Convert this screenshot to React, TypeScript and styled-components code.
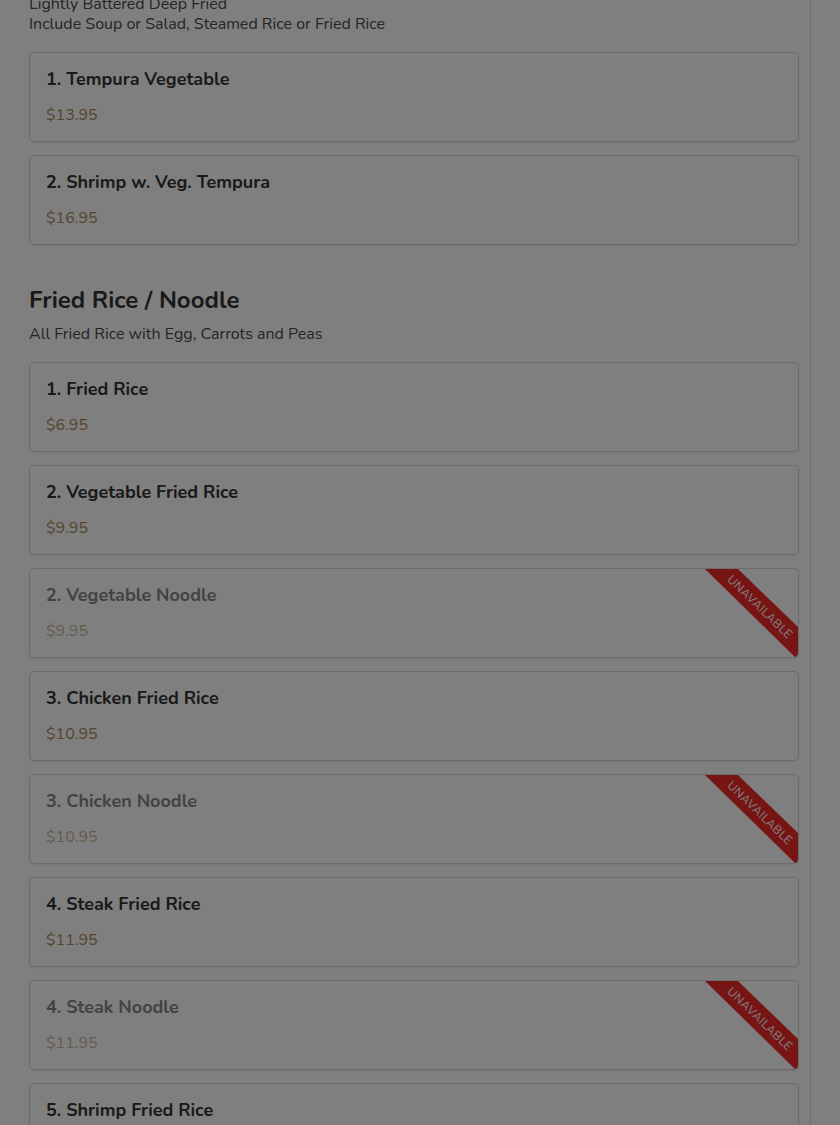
import React from "react";
import styled, { createGlobalStyle } from "styled-components";

const Global = createGlobalStyle`
  html, body { margin: 0; padding: 0; background: #ffffff; }
  body { font-family: "Nunito", "Lato", "Open Sans", sans-serif; overflow: hidden; }
`;

const Page = styled.div`
  width: 811px;
  min-height: 1125px;
  box-sizing: border-box;
  border-right: 1px solid #dcdcdc;
  padding: 0 11px 0 29px;
`;

const Section = styled.section<{ $first?: boolean }>`
  display: flex;
  flex-direction: column;
  margin-top: ${(p) => (p.$first ? "-6px" : "40px")};
`;

const Heading = styled.h2`
  margin: 0 0 9px;
  font-size: 24px;
  line-height: 30px;
  font-weight: 700;
  color: #333333;
`;

const Desc = styled.p`
  margin: 0;
  font-size: 16px;
  line-height: 20px;
  color: #4a4a4a;
`;

const List = styled.div`
  display: flex;
  flex-direction: column;
  gap: 13px;
  margin-top: 18px;
`;

const Card = styled.div`
  position: relative;
  display: flex;
  flex-direction: column;
  gap: 14px;
  padding: 15px 16px 15px;
  border: 1px solid #d6d6d6;
  border-radius: 5px;
  background: #ffffff;
  box-shadow: 0 1px 2px rgba(0, 0, 0, 0.08);
  overflow: hidden;
`;

const Title = styled.div<{ $off?: boolean }>`
  font-size: 18px;
  line-height: 22px;
  font-weight: 700;
  color: #333333;
  opacity: ${(p) => (p.$off ? 0.6 : 1)};
`;

const Price = styled.div<{ $off?: boolean }>`
  font-size: 16px;
  line-height: 22px;
  color: #a8895c;
  opacity: ${(p) => (p.$off ? 0.6 : 1)};
`;

const Ribbon = styled.div`
  position: absolute;
  top: 0;
  right: 0;
  width: 93px;
  height: 89px;
  background: #ee2828;
  clip-path: polygon(0 0, 33px 0, 93px 58px, 93px 87px, 91px 89px);
`;

const RibbonText = styled.span`
  position: absolute;
  left: 55px;
  top: 38px;
  transform: translate(-50%, -50%) rotate(44deg);
  font-size: 12px;
  letter-spacing: 0.3px;
  color: #ffffff;
  white-space: nowrap;
  font-family: "Nunito", "Lato", sans-serif;
`;

const Overlay = styled.div`
  position: fixed;
  inset: 0;
  background: rgba(0, 0, 0, 0.5);
`;

type Item = { name: string; price: string; off?: boolean };

const tempura: Item[] = [
  { name: "1. Tempura Vegetable", price: "$13.95" },
  { name: "2. Shrimp w. Veg. Tempura", price: "$16.95" },
];

const fried: Item[] = [
  { name: "1. Fried Rice", price: "$6.95" },
  { name: "2. Vegetable Fried Rice", price: "$9.95" },
  { name: "2. Vegetable Noodle", price: "$9.95", off: true },
  { name: "3. Chicken Fried Rice", price: "$10.95" },
  { name: "3. Chicken Noodle", price: "$10.95", off: true },
  { name: "4. Steak Fried Rice", price: "$11.95" },
  { name: "4. Steak Noodle", price: "$11.95", off: true },
  { name: "5. Shrimp Fried Rice", price: "$12.95" },
];

const MenuCard = ({ item }: { item: Item }) => (
  <Card>
    <Title $off={item.off}>{item.name}</Title>
    <Price $off={item.off}>{item.price}</Price>
    {item.off && (
      <Ribbon>
        <RibbonText>UNAVAILABLE</RibbonText>
      </Ribbon>
    )}
  </Card>
);

export default function App() {
  return (
    <>
      <Global />
      <Page>
        <Section $first>
          <Desc>Lightly Battered Deep Fried</Desc>
          <Desc>Include Soup or Salad, Steamed Rice or Fried Rice</Desc>
          <List>
            {tempura.map((i) => (
              <MenuCard key={i.name} item={i} />
            ))}
          </List>
        </Section>
        <Section>
          <Heading>Fried Rice / Noodle</Heading>
          <Desc>All Fried Rice with Egg, Carrots and Peas</Desc>
          <List>
            {fried.map((i) => (
              <MenuCard key={i.name} item={i} />
            ))}
          </List>
        </Section>
      </Page>
      <Overlay />
    </>
  );
}
